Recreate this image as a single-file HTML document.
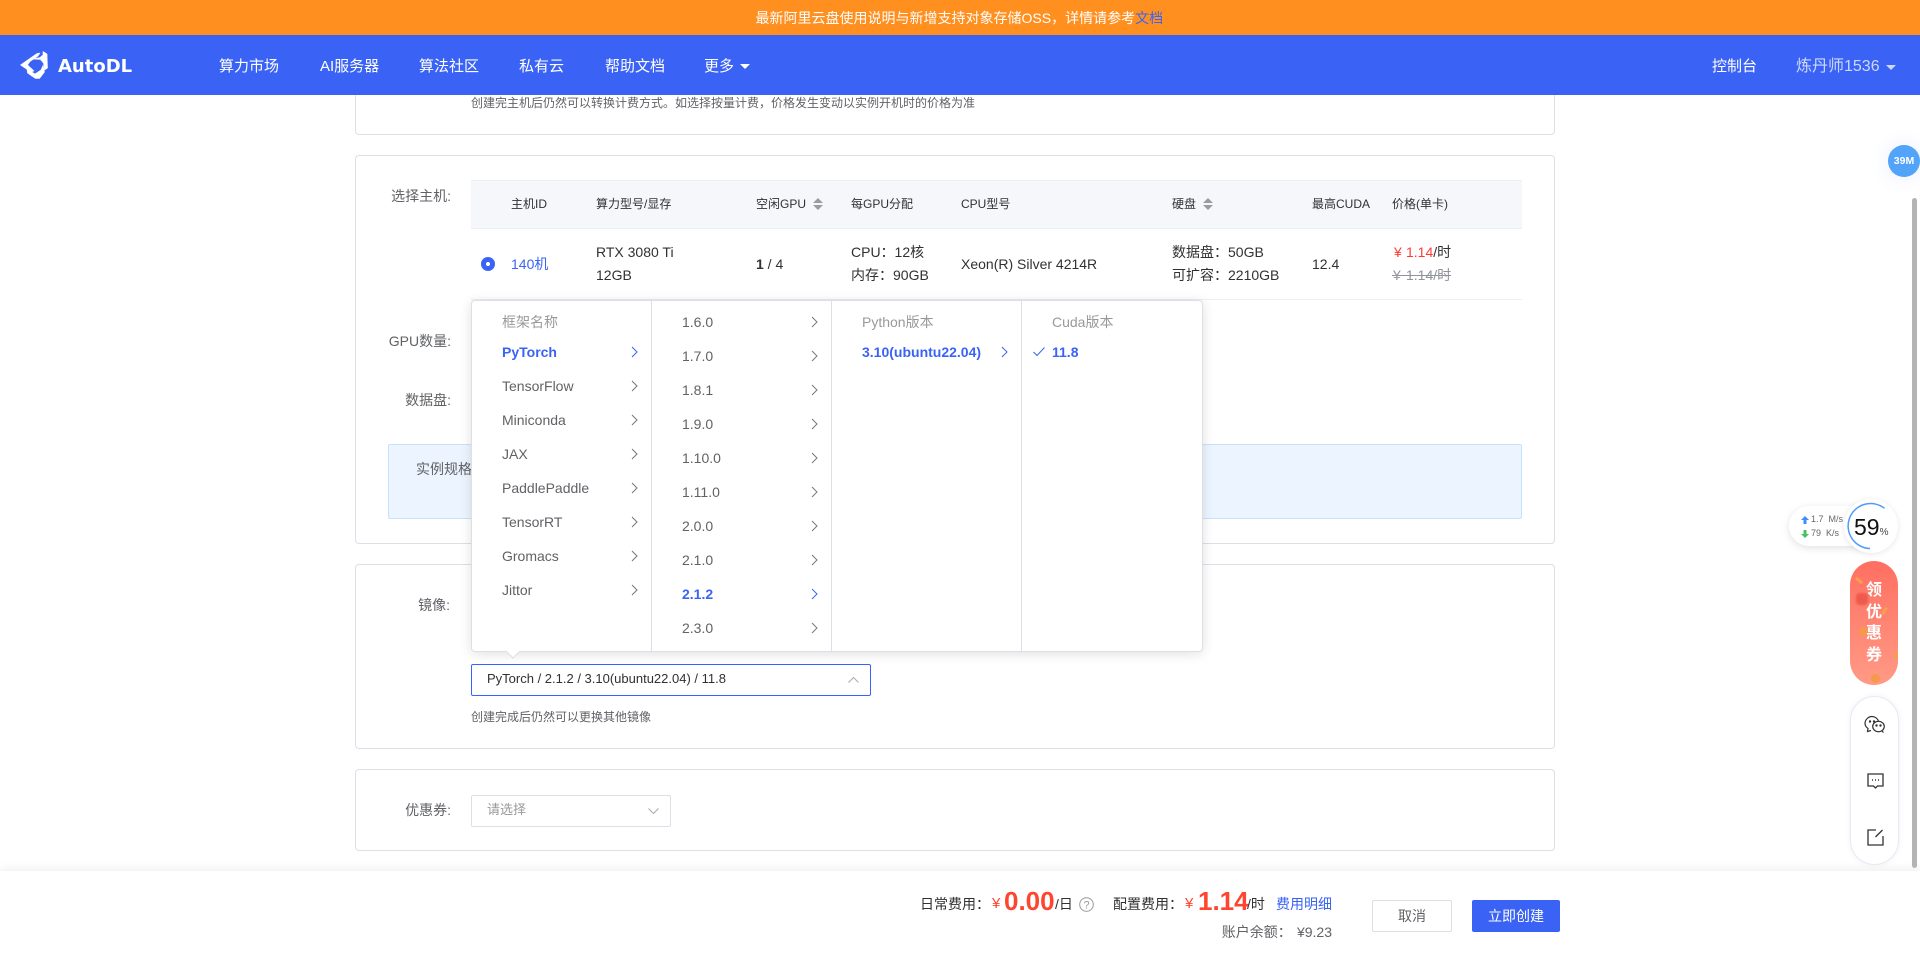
<!DOCTYPE html>
<html lang="zh-CN"><head><meta charset="utf-8"><title>AutoDL</title>
<style>
*{box-sizing:border-box}
html,body{margin:0;padding:0;width:1920px;height:961px;overflow:hidden;background:#fff}
body{position:relative;font-family:"Liberation Sans","Noto Sans CJK SC",sans-serif;font-size:14px;color:#606266}
.a{position:absolute}
.t{position:absolute;white-space:nowrap;line-height:20px;height:20px}
.r{text-align:right}
.card{position:absolute;left:355px;width:1200px;background:#fff;border:1px solid #dcdfe6;border-radius:4px}
.w{color:#fff}
.k{color:#303133}
.h{font-size:12px;color:#303133}
.s{font-size:12px;color:#606266}
.m{color:#606266}
.b{color:#3a63f6;font-weight:bold}
.g{color:#999}
.y{display:inline-block;width:13px}
svg{position:absolute;overflow:visible}
.ch{fill:none;stroke:#777;stroke-width:1}
.chb{fill:none;stroke:#3a63f6;stroke-width:1}
.l{position:absolute;top:301px;width:1px;height:350px;background:#dcdfe6}
</style></head><body>

<!-- top card -->
<div class="card" style="top:60px;height:75px"></div>
<div class="t s" style="left:471px;top:93px">创建完主机后仍然可以转换计费方式。如选择按量计费，价格发生变动以实例开机时的价格为准</div>

<!-- nav -->
<div class="a" style="left:0;top:35px;width:1920px;height:60px;background:#3a63f6"></div>
<div class="a" style="left:0;top:0;width:1920px;height:35px;background:#ff9020"></div>
<div class="t w" style="left:755.500px;top:8px">最新阿里云盘使用说明与新增支持对象存储OSS，详情请参考<span style="color:#3a63f6">文档</span></div>

<svg style="left:19px;top:50px" width="30" height="30" viewBox="0 0 30 30" fill="#fff" stroke="#fff" stroke-width=".6" stroke-linejoin="round">
<path d="M1.500 15L18 3.500 21 3 19 6 11 11.500 8.500 15 15 21 12 22Z"/>
<path d="M24 1.500L28 4 28.500 18 25.500 20 24.500 13 21.500 9.500 13.500 9 21 7.500 24 5Z"/>
<path d="M8 19L16 24 22 20 24 15.500 25.500 22 20.500 28.500 16.500 28.500 8.500 23Z"/>
</svg>
<div class="t w" style="left:58px;top:57px;font:bold 18px/20px 'DejaVu Sans',sans-serif;">AutoDL</div>

<div class="t w" style="left:219px;top:57px;font-size:15px">算力市场</div>
<div class="t w" style="left:320px;top:57px;font-size:15px">AI服务器</div>
<div class="t w" style="left:419px;top:57px;font-size:15px">算法社区</div>
<div class="t w" style="left:519px;top:57px;font-size:15px">私有云</div>
<div class="t w" style="left:605px;top:57px;font-size:15px">帮助文档</div>
<div class="t w" style="left:704px;top:57px;font-size:15px">更多</div>
<div class="a" style="left:740px;top:64px;border:5px solid transparent;border-top:5px solid #fff;border-bottom:0"></div>
<div class="t w" style="left:1712px;top:57px;font-size:15px">控制台</div>
<div class="t" style="left:1796px;top:57px;font-size:16px;color:#cdd8fd">炼丹师1536</div>
<div class="a" style="left:1886px;top:65px;border:5px solid transparent;border-top:5px solid #cdd8fd;border-bottom:0"></div>

<!-- main card -->
<div class="card" style="top:155px;height:389px"></div>
<div class="t r" style="left:351px;width:100px;top:186px">选择主机:</div>
<div class="a" style="left:471px;top:180px;width:1051px;height:49px;background:#f5f7fa;border-top:1px solid #ebeef5;border-bottom:1px solid #ebeef5"></div>
<div class="t h" style="left:511px;top:194px">主机ID</div>
<div class="t h" style="left:596px;top:194px">算力型号/显存</div>
<div class="t h" style="left:756px;top:194px">空闲GPU</div>
<svg style="left:813px;top:198px" width="10" height="12"><path d="M5 0L10 5H0ZM5 12L0 7H10Z" fill="#9a9ca0"/></svg>
<div class="t h" style="left:851px;top:194px">每GPU分配</div>
<div class="t h" style="left:961px;top:194px">CPU型号</div>
<div class="t h" style="left:1172px;top:194px">硬盘</div>
<svg style="left:1203px;top:198px" width="10" height="12"><path d="M5 0L10 5H0ZM5 12L0 7H10Z" fill="#9a9ca0"/></svg>
<div class="t h" style="left:1312px;top:194px">最高CUDA</div>
<div class="t h" style="left:1392px;top:194px">价格(单卡)</div>

<div class="a" style="left:481px;top:257px;width:14px;height:14px;border-radius:50%;background:#3a63f6"></div>
<div class="a" style="left:486px;top:262px;width:4px;height:4px;border-radius:50%;background:#fff"></div>
<div class="t" style="left:511px;top:254px;color:#3a63f6">140机</div>
<div class="t k" style="left:596px;top:242px">RTX 3080 Ti</div>
<div class="t k" style="left:596px;top:265px">12GB</div>
<div class="t k" style="left:756px;top:254px"><b>1</b> / 4</div>
<div class="t k" style="left:851px;top:242px">CPU：12核</div>
<div class="t k" style="left:851px;top:265px">内存：90GB</div>
<div class="t k" style="left:961px;top:254px">Xeon(R) Silver 4214R</div>
<div class="t k" style="left:1172px;top:242px">数据盘：50GB</div>
<div class="t k" style="left:1172px;top:265px">可扩容：2210GB</div>
<div class="t k" style="left:1312px;top:254px">12.4</div>
<div class="t k" style="left:1394px;top:242px"><span style="color:#ff3b30"><span class="y" style="width:12px">¥</span>1.14</span>/时</div>
<div class="t" style="left:1393px;top:265px;color:#909399"><span class="y">¥</span>1.14/时</div>
<div class="a" style="left:1392px;top:275px;width:59px;height:1px;background:#909399"></div>
<div class="a" style="left:471px;top:299px;width:1051px;height:1px;background:#ebeef5"></div>

<div class="t r" style="left:351px;width:100px;top:331px">GPU数量:</div>
<div class="t r" style="left:351px;width:100px;top:390px">数据盘:</div>
<div class="a" style="left:388px;top:444px;width:1134px;height:75px;background:#ecf5ff;border:1px solid #c6e2ff;border-radius:2px"></div>
<div class="t" style="left:416px;top:459px">实例规格</div>

<!-- image card -->
<div class="card" style="top:564px;height:185px"></div>
<div class="t r" style="left:350px;width:100px;top:595px">镜像:</div>
<div class="a" style="left:471px;top:664px;width:400px;height:32px;border:1px solid #3a63f6;border-radius:2px;background:#fff"></div>
<div class="t k" style="left:487px;top:669px;font-size:13px">PyTorch / 2.1.2 / 3.10(ubuntu22.04) / 11.8</div>
<svg style="left:848px;top:677px" width="11" height="6"><path d="M.5 5.500L5.500 .5 10.500 5.500" fill="none" stroke="#aaa"/></svg>
<div class="t s" style="left:471px;top:707px">创建完成后仍然可以更换其他镜像</div>

<!-- coupon card -->
<div class="card" style="top:769px;height:82px"></div>
<div class="t r" style="left:351px;width:100px;top:800px">优惠券:</div>
<div class="a" style="left:471px;top:795px;width:200px;height:32px;border:1px solid #dcdfe6;border-radius:2px;background:#fff"></div>
<div class="t" style="left:487px;top:800px;font-size:13px;color:#999">请选择</div>
<svg style="left:648px;top:808px" width="11" height="6"><path d="M.5 .5L5.500 5.500 10.500 .5" fill="none" stroke="#aaa"/></svg>

<!-- cascader -->
<div class="a" style="left:471px;top:300px;width:732px;height:352px;background:#fff;border:1px solid #dcdfe6;border-radius:4px;box-shadow:0 2px 12px rgba(0,0,0,.12)"></div>
<svg style="left:506px;top:651px" width="14" height="8"><path d="M0 0L7 7 14 0" fill="#fff" stroke="#dcdfe6"/><path d="M1 0H13" stroke="#fff" stroke-width="1.500"/></svg>
<div class="l" style="left:651px"></div>
<div class="l" style="left:831px"></div>
<div class="l" style="left:1021px"></div>

<div class="t g" style="left:502px;top:312px">框架名称</div>
<div class="t b" style="left:502px;top:342px">PyTorch</div>
<div class="t m" style="left:502px;top:376px">TensorFlow</div>
<div class="t m" style="left:502px;top:410px">Miniconda</div>
<div class="t m" style="left:502px;top:444px">JAX</div>
<div class="t m" style="left:502px;top:478px">PaddlePaddle</div>
<div class="t m" style="left:502px;top:512px">TensorRT</div>
<div class="t m" style="left:502px;top:546px">Gromacs</div>
<div class="t m" style="left:502px;top:580px">Jittor</div>
<svg style="left:631px;top:346px" width="7" height="12"><path class="chb" d="M1 1l5 5-5 5"/></svg>
<svg style="left:631px;top:380px" width="7" height="12"><path class="ch" d="M1 1l5 5-5 5"/></svg>
<svg style="left:631px;top:414px" width="7" height="12"><path class="ch" d="M1 1l5 5-5 5"/></svg>
<svg style="left:631px;top:448px" width="7" height="12"><path class="ch" d="M1 1l5 5-5 5"/></svg>
<svg style="left:631px;top:482px" width="7" height="12"><path class="ch" d="M1 1l5 5-5 5"/></svg>
<svg style="left:631px;top:516px" width="7" height="12"><path class="ch" d="M1 1l5 5-5 5"/></svg>
<svg style="left:631px;top:550px" width="7" height="12"><path class="ch" d="M1 1l5 5-5 5"/></svg>
<svg style="left:631px;top:584px" width="7" height="12"><path class="ch" d="M1 1l5 5-5 5"/></svg>

<div class="t m" style="left:682px;top:312px">1.6.0</div>
<div class="t m" style="left:682px;top:346px">1.7.0</div>
<div class="t m" style="left:682px;top:380px">1.8.1</div>
<div class="t m" style="left:682px;top:414px">1.9.0</div>
<div class="t m" style="left:682px;top:448px">1.10.0</div>
<div class="t m" style="left:682px;top:482px">1.11.0</div>
<div class="t m" style="left:682px;top:516px">2.0.0</div>
<div class="t m" style="left:682px;top:550px">2.1.0</div>
<div class="t b" style="left:682px;top:584px">2.1.2</div>
<div class="t m" style="left:682px;top:618px">2.3.0</div>
<svg style="left:811px;top:316px" width="7" height="12"><path class="ch" d="M1 1l5 5-5 5"/></svg>
<svg style="left:811px;top:350px" width="7" height="12"><path class="ch" d="M1 1l5 5-5 5"/></svg>
<svg style="left:811px;top:384px" width="7" height="12"><path class="ch" d="M1 1l5 5-5 5"/></svg>
<svg style="left:811px;top:418px" width="7" height="12"><path class="ch" d="M1 1l5 5-5 5"/></svg>
<svg style="left:811px;top:452px" width="7" height="12"><path class="ch" d="M1 1l5 5-5 5"/></svg>
<svg style="left:811px;top:486px" width="7" height="12"><path class="ch" d="M1 1l5 5-5 5"/></svg>
<svg style="left:811px;top:520px" width="7" height="12"><path class="ch" d="M1 1l5 5-5 5"/></svg>
<svg style="left:811px;top:554px" width="7" height="12"><path class="ch" d="M1 1l5 5-5 5"/></svg>
<svg style="left:811px;top:588px" width="7" height="12"><path class="chb" d="M1 1l5 5-5 5"/></svg>
<svg style="left:811px;top:622px" width="7" height="12"><path class="ch" d="M1 1l5 5-5 5"/></svg>

<div class="t g" style="left:862px;top:312px">Python版本</div>
<div class="t b" style="left:862px;top:342px">3.10(ubuntu22.04)</div>
<svg style="left:1001px;top:346px" width="7" height="12"><path class="chb" d="M1 1l5 5-5 5"/></svg>
<div class="t g" style="left:1052px;top:312px">Cuda版本</div>
<svg style="left:1033px;top:347px" width="12" height="9"><path class="chb" d="M.5 5L4 8.500 11.500 .5"/></svg>
<div class="t b" style="left:1052px;top:342px">11.8</div>

<!-- footer -->
<div class="a" style="left:0;top:871px;width:1920px;height:90px;background:#fff;box-shadow:0 -3px 8px rgba(0,0,0,.06)"></div>
<div class="t k" style="left:920px;top:894px">日常费用：</div>
<div class="t" style="left:992px;top:894px;color:#ff4530;font-size:15px">¥</div>
<div class="t" style="left:1004px;top:887px;height:28px;line-height:28px;font-size:26px;font-weight:bold;color:#ff4530">0.00</div>
<div class="t k" style="left:1055px;top:894px">/日</div>
<svg style="left:1079px;top:897px" width="15" height="15"><circle cx="7.500" cy="7.500" r="6.800" fill="none" stroke="#999"/><text x="7.500" y="11.500" font-size="11" text-anchor="middle" fill="#999" font-family="Liberation Sans">?</text></svg>
<div class="t k" style="left:1113px;top:894px">配置费用：</div>
<div class="t" style="left:1185px;top:894px;color:#ff4530;font-size:15px">¥</div>
<div class="t" style="left:1198px;top:887px;height:28px;line-height:28px;font-size:26px;font-weight:bold;color:#ff4530">1.14</div>
<div class="t k" style="left:1247px;top:894px">/时</div>
<div class="t" style="left:1276px;top:894px;color:#3a63f6">费用明细</div>
<div class="t r" style="left:1132px;width:200px;top:922px">账户余额：<span class="y" style="width:13px">¥</span>9.23</div>
<div class="a" style="left:1372px;top:900px;width:80px;height:32px;border:1px solid #dcdfe6;border-radius:2px;text-align:center;line-height:30px">取消</div>
<div class="a w" style="left:1472px;top:900px;width:88px;height:32px;background:#3a63f6;border-radius:2px;text-align:center;line-height:32px">立即创建</div>

<!-- scrollbar -->
<div class="a" style="left:1912px;top:198px;width:5px;height:670px;background:#b4b4b4;border-radius:3px"></div>

<!-- 39M -->
<div class="a" style="left:1888px;top:145px;width:32px;height:32px;border-radius:50%;background:#52a3fa;box-shadow:0 0 20px rgba(82,110,250,.12)"></div>
<div class="t w" style="left:1888px;top:151px;width:32px;text-align:center;font-size:10.500px;font-weight:bold">39M</div>

<!-- net widget -->
<div class="a" style="left:1789px;top:506px;width:90px;height:40px;background:#fff;border-radius:20px;box-shadow:0 2px 8px rgba(0,0,0,.12)"></div>
<svg style="left:1801px;top:516px" width="8" height="8"><path d="M4 0L8 4H5.500V8H2.500V4H0Z" fill="#3f8efc"/></svg>
<svg style="left:1801px;top:530px" width="8" height="8"><path d="M4 8L8 4H5.500V0H2.500V4H0Z" fill="#43c463"/></svg>
<div class="t" style="left:1811px;top:509px;font-size:9px;color:#666">1.7&nbsp; M/s</div>
<div class="t" style="left:1811px;top:523px;font-size:9px;color:#666">79&nbsp; K/s</div>
<div class="a" style="left:1844px;top:499px;width:54px;height:54px;border-radius:50%;background:#fff;box-shadow:0 1px 6px rgba(0,0,0,.1)"></div>
<svg style="left:1846px;top:501px" width="50" height="50"><path d="M38.500 7.300A22.500 22.500 0 1 0 24 47.500" fill="none" stroke="#4e9bfb" stroke-width="1.500"/></svg>
<div class="t" style="left:1854px;top:515px;height:24px;line-height:24px;font-size:23px;color:#111">59<span style="font-size:10px;color:#444">%</span></div>

<!-- coupon pill -->
<div class="a" style="left:1850px;top:561px;width:48px;height:124px;border-radius:24px;background:linear-gradient(180deg,#ff6f61,#ff9a85);overflow:hidden">
<div class="a" style="left:5px;top:18px;width:8px;height:3px;background:#f5a04a;transform:rotate(40deg)"></div>
<div class="a" style="left:6px;top:32px;width:12px;height:12px;border-radius:4px;background:#ee5a4c;filter:blur(1px)"></div>
<div class="a" style="left:33px;top:46px;width:3px;height:8px;background:#f5a04a;transform:rotate(30deg)"></div>
<div class="a" style="left:9px;top:66px;width:9px;height:9px;border-radius:50%;background:#f59a4a"></div>
<div class="a" style="left:21px;top:113px;width:9px;height:9px;border-radius:50%;background:#f59a4a"></div>
<div class="a" style="left:45px;top:90px;width:3px;height:8px;background:#f5a04a;transform:rotate(30deg)"></div>
</div>
<div class="a w" style="left:1850px;top:578px;width:48px;text-align:center;font:bold 16px/21.500px 'Noto Sans CJK SC',sans-serif">领<br>优<br>惠<br>券</div>

<!-- service pill -->
<div class="a" style="left:1850px;top:696px;width:49px;height:169px;border-radius:25px;background:#fff;border:1px solid #e8e9f3;box-shadow:0 0 6px rgba(120,120,180,.1)"></div>
<svg style="left:1864px;top:715px" width="22" height="18" fill="none" stroke="#333" stroke-width="1.200"><path d="M7 15.500L3.500 16.500 4 13.500C2 12 1 10.500 1 8.500 1 4.500 4.500 1.500 8 1.500 11 1.500 13.500 3.500 14.500 6"/><ellipse cx="14.500" cy="11.500" rx="5.800" ry="5.200"/><path d="M18 16L19.500 17.500" /><circle cx="6" cy="6.500" r=".6" fill="#333"/><circle cx="10" cy="6.500" r=".6" fill="#333"/><circle cx="12.500" cy="10.500" r=".6" fill="#333"/><circle cx="16.500" cy="10.500" r=".6" fill="#333"/></svg>
<svg style="left:1867px;top:773px" width="17" height="16" fill="none" stroke="#333" stroke-width="1.300"><path d="M1 1H16V13H10.500L8.500 15 6.500 13H1Z"/><path d="M5 7H6M8 7H9M11 7H12" stroke-width="1.500"/></svg>
<svg style="left:1867px;top:829px" width="17" height="17" fill="none" stroke="#333" stroke-width="1.300"><path d="M9 1H1V16H16V7"/><path d="M15.500 1L8.500 8"/></svg>

</body></html>
